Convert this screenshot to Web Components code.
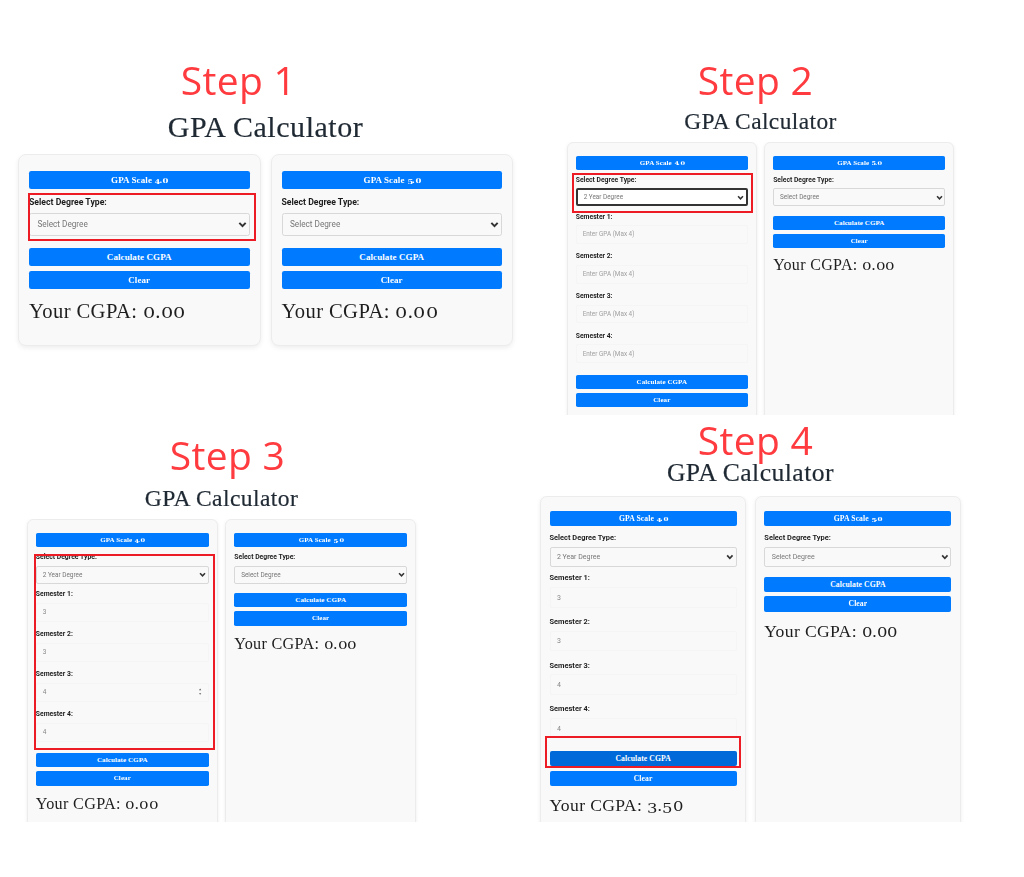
<!DOCTYPE html>
<html lang="en">
<head>
<meta charset="utf-8">
<title>GPA Calculator steps</title>
<style>
  html, body { margin: 0; background: #fff; }
  body { width: 1024px; height: 877px; overflow: hidden; font-family: "Liberation Serif", serif; }
  .board { display: grid; grid-template-columns: 530px 1fr; grid-template-rows: 415px 1fr; height: 877px; filter: blur(.3px); }
</style>
</head>
<body>
<div class="board">
  <gpa-shot step="Step 1" style="--em:10px;--left:18px;--top:60px;--width:495px;--cards:192px;--bleed:6px;--over:0px;--shift:-27px;--label-gap:11px">
    <gpa-card scale="4.0" highlight="degree" inset="-3px -6px -5px -1px"></gpa-card>
    <gpa-card scale="5.0"></gpa-card>
  </gpa-shot>
  <gpa-shot step="Step 2" style="--em:7.8px;--left:37px;--top:60px;--width:387px;--cards:273px;--bleed:0px;--over:20px;--shift:-5px;--label-gap:9px">
    <gpa-card scale="4.0" degree="2 Year Degree" focus highlight="degree" inset="-3px -5px -7px -4px"></gpa-card>
    <gpa-card scale="5.0"></gpa-card>
  </gpa-shot>
  <gpa-shot step="Step 3" style="--em:7.85px;--left:27px;--top:20px;--width:389px;--cards:303px;--bleed:0px;--over:20px;--shift:6px;--label-gap:11px">
    <gpa-card scale="4.0" degree="2 Year Degree" values="3,3,4,4" spin="2" highlight="fields" inset="-36px -6px 0px -2px"></gpa-card>
    <gpa-card scale="5.0"></gpa-card>
  </gpa-shot>
  <gpa-shot step="Step 4" style="--em:8.55px;--left:10px;--top:5px;--width:421px;--cards:326px;--bleed:0px;--over:20px;--shift:5px;--label-gap:0px">
    <gpa-card scale="4.0" degree="2 Year Degree" values="3,3,4,4" pressed highlight="calc" inset="-15px -4px -2px -5px" result="3.50"></gpa-card>
    <gpa-card scale="5.0"></gpa-card>
  </gpa-shot>
</div>

<script>
// digits in the reference are old-style figures, no installed serif has them
const figStyles = `
  .fig {
    display: inline-block;
    font: .72em/1 "DejaVu Serif", serif;
    width: .83em;
    transform: scaleX(1.3);
    transform-origin: 0 50%;
  }
  .low { position: relative; top: .16em; }
`;
const oldstyle = (text) => text.replace(/\d/g, (d) => {
  const low = '3459'.includes(d) ? ' low' : '';
  return `<span class="fig${low}">${d}</span>`;
});

const _shot = document.createElement('template');
_shot.innerHTML = /*html*/ `
<style>
  :host { display: block; font-size: var(--em); margin: var(--top) 0 0 var(--left); width: var(--width); }
  .step {
    font: 39px/40px "Open Sans", sans-serif;
    letter-spacing: .3px;
    color: #ff3b3f;
    text-align: center;
    transform: translateX(var(--shift));
    margin-bottom: var(--label-gap);
  }
  .title {
    font: 3em/1.05 "Liberation Serif", serif;
    color: #1f2933;
    text-align: center;
    letter-spacing: .018em;
    height: 1.05em;
    margin-bottom: .37em;
    -webkit-text-stroke: .2px #1f2933;
  }
  .cards {
    display: grid;
    grid-template-columns: 1fr 1fr;
    gap: 1em;
    height: var(--cards);
    overflow: hidden;
    padding: 0 4px var(--bleed);
    margin: 0 -4px calc(var(--bleed) * -1);
  }
</style>
<div class="step"></div>
<div class="title">GPA Calculator</div>
<div class="cards"><slot></slot></div>`;

class GpaShot extends HTMLElement {
  connectedCallback() {
    const root = this.attachShadow({ mode: 'open' });
    root.appendChild(_shot.content.cloneNode(true));
    root.querySelector('.step').textContent = this.getAttribute('step');
  }
}

const _button = document.createElement('template');
_button.innerHTML = /*html*/ `
<style>
  :host { display: block; }
  div {
    background: var(--btn, #007bff);
    border-radius: .25em;
    color: #fff;
    font: bold .9em/2 "Liberation Serif", serif;
    height: 2em;
    text-align: center;
    letter-spacing: .01em;
  }
  ${figStyles}
  .fig { font-weight: bold; }
</style>
<div></div>`;

class GpaButton extends HTMLElement {
  connectedCallback() {
    const root = this.attachShadow({ mode: 'open' });
    root.appendChild(_button.content.cloneNode(true));
    root.querySelector('div').innerHTML = oldstyle(this.getAttribute('label'));
  }
}

const _card = document.createElement('template');
_card.innerHTML = /*html*/ `
<style>
  :host {
    display: flex;
    flex-direction: column;
    box-sizing: border-box;
    min-width: 0;
    min-height: calc(var(--cards) + var(--over));
    background: #f9f9f9;
    border: 1px solid #ececec;
    border-radius: .8em;
    box-shadow: 0 .2em .5em rgba(0,0,0,.07);
    padding: 1.6em 1em 0;
    font-family: "Roboto", sans-serif;
  }
  .group { position: relative; }
  .hl { position: absolute; border: 2.5px solid #ed1c24; pointer-events: none; }
  label { display: block; font: bold .87em/1.38 "Roboto", sans-serif; color: #1d1d1d; }
  #degree { margin: .75em 0 .8em; }
  .box {
    box-sizing: border-box;
    display: flex;
    align-items: center;
    justify-content: space-between;
    height: 2.3em;
    margin-top: .45em;
    padding: 0 .2em 0 .75em;
    background: #f9f9f9;
    border: 1px solid #d8d8d8;
    border-radius: .25em;
    font-size: 1em;
    color: #777;
  }
  .box span { font-size: .82em; }
  .focus { background: #fff; border: 2px solid #333; }
  .input { height: 2.4em; border-color: #f5f5f5; margin-top: .4em; padding-right: .6em; }
  .input span { color: #888; }
  .input .ph { color: #a0a0a0; }
  .sem { margin-bottom: 1.1em; }
  .actions { display: grid; gap: .5em; margin-top: .4em; }
  .result { font: 2.06em/1.18 "Liberation Serif", serif; color: #1e1e1e; margin-top: .52em; letter-spacing: .02em; }
  ${figStyles}
  svg { display: block; flex: none; }
</style>
<div class="group" id="degree">
  <label>Select Degree Type:</label>
  <div class="box select"><span id="degree-text"></span>
    <svg width=".9em" height=".9em" viewBox="0 0 10 10"><path d="M1.5 3.2 5 6.8l3.5-3.6" fill="none" stroke="#333" stroke-width="2.2"/></svg>
  </div>
</div>
<div class="group" id="fields"></div>
<div class="actions">
  <div class="group" id="calc"><gpa-button id="calc-btn" label="Calculate CGPA"></gpa-button></div>
  <gpa-button label="Clear"></gpa-button>
</div>
<div class="result"></div>`;

class GpaCard extends HTMLElement {
  connectedCallback() {
    const root = this.attachShadow({ mode: 'open' });
    root.appendChild(_card.content.cloneNode(true));

    // scale button goes first, it sits outside the degree group
    const scale = document.createElement('gpa-button');
    scale.setAttribute('label', 'GPA Scale ' + this.getAttribute('scale'));
    root.insertBefore(scale, root.querySelector('#degree'));

    const degree = this.getAttribute('degree');
    root.querySelector('#degree-text').textContent = degree || 'Select Degree';
    if (this.hasAttribute('focus')) root.querySelector('.select').classList.add('focus');

    if (degree) {
      const values = (this.getAttribute('values') || '').split(',');
      const spin = this.getAttribute('spin');
      let html = '';
      for (let i = 0; i < 4; i++) {
        const value = values[i];
        const arrows = String(i) === spin
          ? '<svg width=".8em" height="1.2em" viewBox="0 0 8 12"><path d="M4 2 2.6 4h2.8zM4 10 2.6 8h2.8z" fill="#555"/></svg>'
          : '';
        html += `<div class="sem"><label>Semester ${i + 1}:</label>
          <div class="box input"><span class="${value ? '' : 'ph'}">${value || 'Enter GPA (Max 4)'}</span>${arrows}</div></div>`;
      }
      root.querySelector('#fields').innerHTML = html;
    }

    if (this.hasAttribute('pressed')) root.querySelector('#calc-btn').style.setProperty('--btn', '#0069d9');

    root.querySelector('.result').innerHTML = 'Your CGPA: ' + oldstyle(this.getAttribute('result') || '0.00');

    const highlight = this.getAttribute('highlight');
    if (highlight) {
      const box = document.createElement('div');
      box.className = 'hl';
      box.style.inset = this.getAttribute('inset');
      root.querySelector('#' + highlight).appendChild(box);
    }
  }
}

customElements.define('gpa-button', GpaButton);
customElements.define('gpa-shot', GpaShot);
customElements.define('gpa-card', GpaCard);
</script>
</body>
</html>
